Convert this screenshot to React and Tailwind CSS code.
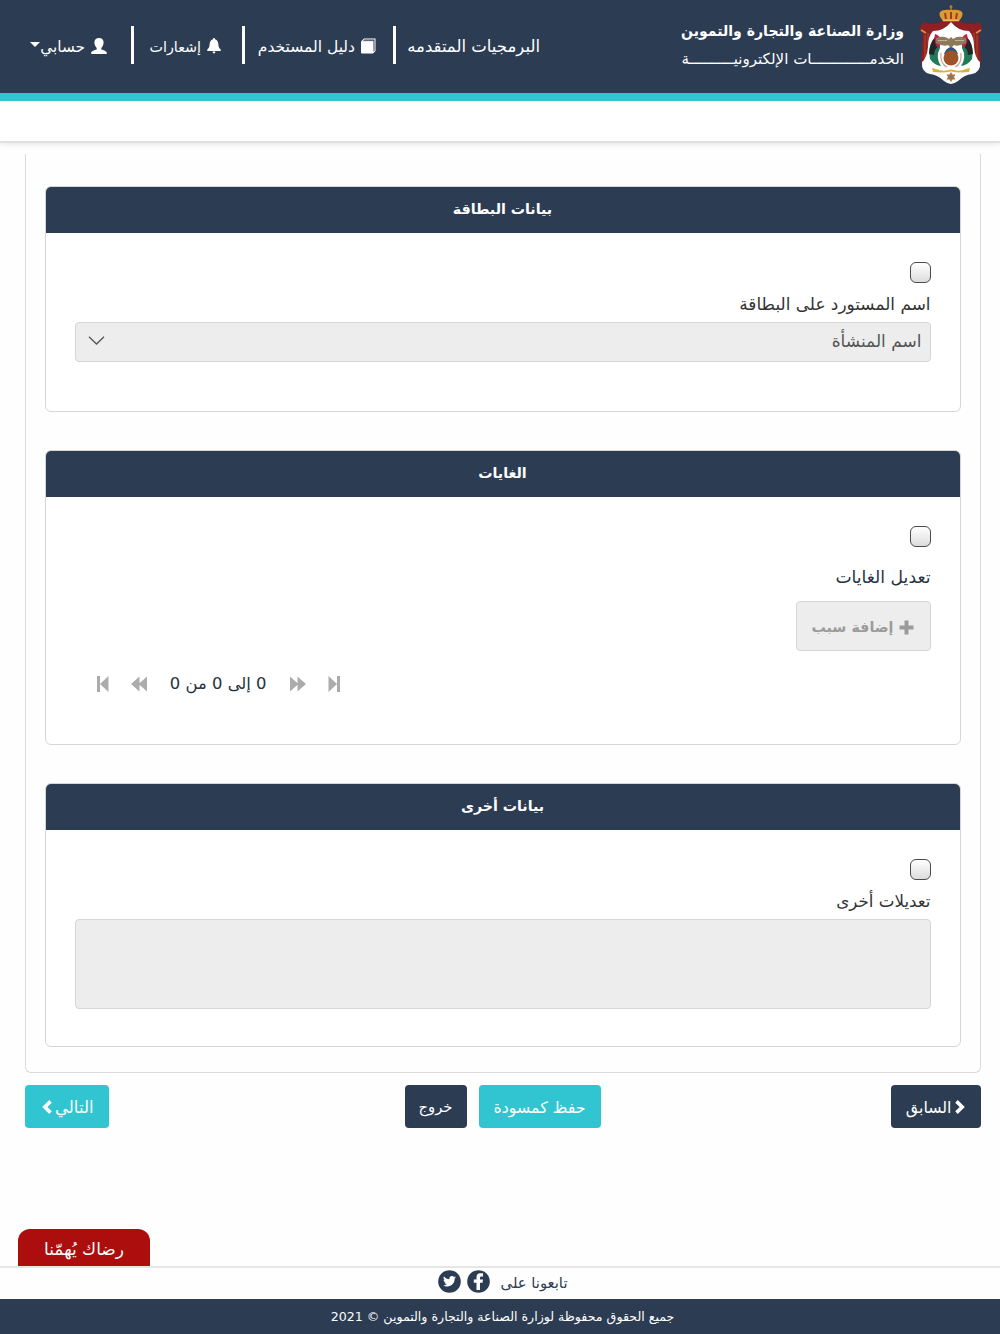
import React, { useState } from 'react';

const Emblem = () => (
    <svg width="62" height="80" viewBox="0 0 62 80" className="shrink-0">
        <path d="M20 17 Q9 21 5 17 Q0 19 0 25 L3 29 L1 57 L10 60 L14 30 L31 18 L48 30 L52 60 L61 57 L59 29 L62 25 Q62 19 57 17 Q53 21 42 17 Q36 14 31 16 Q26 14 20 17Z" fill="#8f1f22" />
        <path d="M5 30v24M8 28v28M54 28v28M57 30v24" stroke="#a9502a" strokeWidth="1" />
        <path d="M1 25l5 3M61 25l-5 3" stroke="#d9953c" strokeWidth="1.500" />
        <path d="M31 17 Q24 26 13 26 Q8 31 8 42 Q7 53 2 57 Q1 67 10 69 Q18 70 24 76 Q28 79 31 79 Q34 79 38 76 Q44 70 52 69 Q61 67 60 57 Q55 53 54 42 Q54 31 49 26 Q38 26 31 17Z" fill="#fff" />
        <path d="M20 32 L13 35 Q8 44 10 54 Q14 60 21 61 Q15 52 20 43Z" fill="#1e7a57" />
        <path d="M20 32 L15 32 Q9 39 9 49 L14 50 Q14 44 20 40Z" fill="#222629" />
        <path d="M15 29 Q19 30 22 36 L18 43 Q13 37 15 29Z" fill="#c41f4b" />
        <path d="M42 32 L49 35 Q54 44 52 54 Q48 60 41 61 Q47 52 42 43Z" fill="#1e7a57" />
        <path d="M42 32 L47 32 Q53 39 53 49 L48 50 Q48 44 42 40Z" fill="#222629" />
        <path d="M47 29 Q43 30 40 36 L44 43 Q49 37 47 29Z" fill="#c41f4b" />
        <path d="M16 33 Q24 30 29 34 L31 32 L33 34 Q38 30 46 33 L46 38 Q38 42 34 40 L31 43 L28 40 Q24 42 16 38Z" fill="#8d7a5b" />
        <path d="M18 35.500h9M35 35.500h9" stroke="#c2b391" strokeWidth="1.200" />
        <path d="M21 48 Q20 59 27 62 M41 48 Q42 59 35 62" stroke="#c9a28e" strokeWidth="1.2" fill="none" />
        <path d="M24 49 Q26 43 31 42 Q36 43 38 49Z" fill="#2c567d" />
        <circle cx="31" cy="53" r="7.500" fill="#9c5329" />
        <path d="M12 63 L16 64 Q23 67 31 64.500 Q39 67 46 64 L50 63 L49 67 Q39 68 31 66.500 Q23 68 13 67Z" fill="#d9b13c" />
        <path d="M31 67l1.500 2.500h3L34 72l1.500 2.500h-3L31 77l-1.500-2.500h-3L28 72l-1.500-2.500h3z" fill="#b5713f" />
        <circle cx="31" cy="72" r="1.500" fill="#4f8a80" />
        <path d="M23 16 Q18 10 20 7 Q23 4 31 5 Q39 4 42 7 Q44 10 39 16Z" fill="#dd9838" />
        <path d="M25 8l1 6M37 8l-1 6M31 7v7" stroke="#a63a24" strokeWidth="2" />
        <path d="M23 15.500h16" stroke="#efc458" strokeWidth="1.500" />
        <path d="M31 0v5M29.500 2h3" stroke="#c98f38" strokeWidth="1.200" />
    </svg>
);

const UserIcon = () => (
    <svg width="16" height="16" viewBox="0 0 16 16" fill="#fff">
        <path d="M8 0C5 0 3.300 1.800 3.400 4.600C3.500 7 4.300 8.700 5.700 10V11.400C3.300 12.200 .3 13 .2 14.600V16H15.800V14.600C15.700 13 12.700 12.200 10.300 11.400V10C11.700 8.700 12.500 7 12.600 4.600C12.700 1.800 11 0 8 0Z" />
    </svg>
);

const BellIcon = () => (
    <svg width="14" height="16" viewBox="0 0 14 16" fill="#fff">
        <path d="M7 0Q6 0 5.900 1.200C3.600 2 2.700 4 2.600 6.500C2.400 9.300 1.800 10.300 .3 11.500Q-.3 13 1 13H13Q14.300 13 13.700 11.500C12.200 10.300 11.600 9.300 11.400 6.500C11.300 4 10.400 2 8.100 1.200Q8 0 7 0ZM5.600 13.400a1.400 2 0 0 0 2.800 0Z" />
    </svg>
);

const BookIcon = () => (
    <svg width="15" height="16" viewBox="0 0 15 16">
        <path d="M0 3.500L3 .5H14.500V13L12 15.500V3.500Z" fill="#fff" />
        <path d="M2 2.800L3.300 1.500H13.500V12.700L12.500 13.700V2.800Z" fill="#2c3c52" />
        <path d="M0 3.200H12V15.500H1Q0 15.500 0 14.500Z" fill="#fff" />
    </svg>
);

const PlusIcon = () => (
    <svg width="15" height="15" viewBox="0 0 15 15" fill="currentColor">
        <path d="M5.500 .5h4v5h5v4h-5v5h-4v-5h-5v-4h5z" />
    </svg>
);

const ChevronIcon = () => (
    <svg width="10" height="14" viewBox="0 0 10 14" fill="none" stroke="currentColor" strokeWidth="3.600">
        <path d="M1.500 1.400L7.200 7L1.500 12.600" />
    </svg>
);

const FacebookIcon = () => (
    <svg width="23" height="23" viewBox="0 0 23 23">
        <circle cx="11.500" cy="11.500" r="11.300" fill="#2c3c52" />
        <path d="M9.500 20V12.700H6.800V9.500H9.500V7.200Q9.500 3.300 13.200 3.300H16V6.500H14.300Q13 6.500 13 7.800V9.500H16L15.500 12.700H13V20Z" fill="#fff" />
    </svg>
);

const TwitterIcon = () => (
    <svg width="23" height="23" viewBox="0 0 23 23">
        <circle cx="11.500" cy="11.500" r="11.300" fill="#2c3c52" />
        <path
            transform="translate(5 4.800) scale(.54)"
            d="M23.950 4.570a10 10 0 0 1-2.820.77 4.960 4.960 0 0 0 2.160-2.720c-.95.560-2 .96-3.130 1.180a4.920 4.920 0 0 0-8.380 4.480C7.690 8.090 4.070 6.130 1.640 3.160a4.820 4.820 0 0 0-.67 2.480c0 1.710.87 3.210 2.190 4.100a4.900 4.900 0 0 1-2.230-.62v.06a4.920 4.920 0 0 0 3.950 4.830 5 5 0 0 1-2.210.08 4.940 4.940 0 0 0 4.600 3.420A9.870 9.870 0 0 1 0 19.540a14 14 0 0 0 7.550 2.210c9.050 0 14-7.500 14-13.980 0-.21 0-.42-.02-.63a9.940 9.940 0 0 0 2.460-2.550z"
            fill="#fff"
        />
    </svg>
);

const Divider = () => <span className="h-[38px] w-[3px] bg-white" />;

const Header = () => (
    <header className="border-b-2 border-[#dfe1e1] bg-white shadow-[0_2px_4px_rgba(0,0,0,0.08)]">
        <div className="flex h-[93px] items-start bg-[#2c3c52] pr-[18px] text-[15px] text-white">
            <div className="pt-[5px]">
                <Emblem />
            </div>
            <div className="mr-4 w-[223px] whitespace-nowrap pt-[17px] leading-[28px]">
                <div className="origin-right scale-x-[0.937] text-[15px] font-bold">وزارة الصناعة والتجارة والتموين</div>
                <div className="text-[15.1px]">الخدمـــــــــــــات الإلكترونيــــــــــة</div>
            </div>
            <nav className="mr-[141px] flex items-center whitespace-nowrap pt-[26px]">
                <span className="w-[132px] pt-1 text-[16.5px]">البرمجيات المتقدمه</span>
                <span className="mr-3 flex"><Divider /></span>
                <span className="mr-[17px] pt-0.5"><BookIcon /></span>
                <span className="mr-1.5 w-[97px] pt-1.5 text-[15.5px]">دليل المستخدم</span>
                <span className="mr-[13px] flex"><Divider /></span>
                <span className="mr-[21px] pt-0.5"><BellIcon /></span>
                <span className="mr-1.5 w-[51px] pt-1.5 text-[14.3px]">إشعارات</span>
                <span className="mr-4 flex"><Divider /></span>
                <span className="mr-6 pt-0.5"><UserIcon /></span>
                <span className="mr-1.5 w-[45px] pt-1 text-[15.3px]">حسابي</span>
                <span className="mb-0.5 border-x-[5px] border-t-[5px] border-x-transparent border-t-white" />
            </nav>
        </div>
        <div className="h-2 bg-[#31c5d1]" />
        <div className="h-10" />
    </header>
);

const Panel = ({ title, className, children }) => (
    <section className={`overflow-hidden rounded-md border border-[#d4d6d8] bg-white ${className}`}>
        <h2 className="h-[45.5px] bg-[#2c3c52] text-center text-[14.2px] font-bold leading-[44px] text-white">
            {title}
        </h2>
        <div className="px-[29px] pt-[29px]">{children}</div>
    </section>
);

const Checkbox = () => {
    const [checked, setChecked] = useState(false);
    return (
        <input
            type="checkbox"
            checked={checked}
            onChange={(e) => setChecked(e.target.checked)}
            className="block size-[21px] appearance-none rounded-md border-[1.5px] border-[#4a4a4a] bg-linear-to-b from-white to-[#dcdcdc] checked:to-[#31c5d1]"
        />
    );
};

const FirstIcon = () => (
    <svg width="12" height="16" viewBox="0 0 12 16" fill="#acacac">
        <path d="M0 0h3v16H0zM11.500 0v16L3 8z" />
    </svg>
);

const PrevIcon = () => (
    <svg width="16" height="16" viewBox="0 0 16 16" fill="#acacac">
        <path d="M8.500 .5v15L0 8zM16 .5v15L7.500 8z" />
    </svg>
);

const App = () => (
    <div dir="rtl" className="flex h-[1334px] flex-col overflow-hidden bg-[#fefefe] font-['DejaVu_Sans',sans-serif] text-[#333]">
        <Header />

        <main className="mt-[11px] flex-1 pr-[19.5px] pl-[24.5px]">
            <div className="h-[919px] rounded-b-md border-x-[1.5px] border-b-[1.5px] border-[#d8dadb] px-[19px] pt-8">
                <Panel title="بيانات البطاقة" className="h-[226px]">
                    <Checkbox />
                    <div className="mt-2 h-[29px] text-[16.9px] leading-[26px]">اسم المستورد على البطاقة</div>
                    <div className="mt-0.5 flex h-10 items-center justify-between rounded border border-[#d5d6d7] bg-[#ededed] pr-2 pb-0.5 pl-3 text-[17px] text-[#555]">
                        <span className="leading-[34px]">اسم المنشأة</span>
                        <svg width="17" height="9" viewBox="0 0 17 9" fill="none" stroke="#555" strokeWidth="1.3">
                            <path d="M1 .8L8.500 8L16 .8" />
                        </svg>
                    </div>
                </Panel>

                <Panel title="الغايات" className="mt-[38px] h-[295px]">
                    <Checkbox />
                    <div className="mt-[17px] h-[29px] text-[17.2px] leading-[26px] text-[#263242]">تعديل الغايات</div>
                    <button disabled className="mt-2 flex h-[50px] w-[135px] items-center rounded border border-[#d5d6d7] bg-[#ededed] pt-1 pr-4 text-[14.3px] font-bold whitespace-nowrap text-[#9b9b9b]">
                        <PlusIcon />
                        <span className="mr-[5px]">إضافة سبب</span>
                    </button>
                    <div dir="ltr" className="mt-[21.5px] flex h-6 items-center pl-[22px] text-[16.4px] text-[#263242]">
                        <FirstIcon />
                        <span className="ml-[22px]"><PrevIcon /></span>
                        <span dir="rtl" className="ml-[23px] w-[97px] whitespace-nowrap leading-6">0 إلى 0 من 0</span>
                        <span className="ml-[23px] rotate-180"><PrevIcon /></span>
                        <span className="ml-[22px] rotate-180"><FirstIcon /></span>
                    </div>
                </Panel>

                <Panel title="بيانات أخرى" className="mt-[38px] h-[264px]">
                    <Checkbox />
                    <div className="mt-2 h-[29px] text-[16.7px] leading-[26px]">تعديلات أخرى</div>
                    <textarea disabled className="mt-0.5 block h-[90px] w-full resize-none rounded border border-[#d5d6d7] bg-[#ededed]" />
                </Panel>
            </div>

            <div className="mt-3 flex h-[43px] whitespace-nowrap text-[15.8px] text-white">
                <button className="flex w-[90px] items-center rounded bg-[#2c3c52] pr-4">
                    <ChevronIcon />
                    <span className="mr-[3px] pt-0.5">السابق</span>
                </button>
                <button className="mr-[290px] w-[122px] rounded bg-[#31c5d1] pt-0.5">حفظ كمسودة</button>
                <button className="mr-3 w-[62px] rounded bg-[#2c3c52] pt-0.5 text-[14.8px]">خروج</button>
                <button className="mr-auto flex w-[84px] items-center rounded bg-[#31c5d1] pr-[15px]">
                    <span className="w-[38px] pt-1 text-[16.5px]">التالي</span>
                    <span className="mr-1 rotate-180"><ChevronIcon /></span>
                </button>
            </div>
        </main>

        <div className="flex justify-end pl-[18px]">
            <button className="h-[37px] w-[132px] rounded-t-xl bg-[#ac0d0d] pt-1 text-[17px] text-white">رضاك يُهمّنا</button>
        </div>
        <footer>
            <div className="flex h-[33px] items-center justify-center border-t-2 border-[#e6e6e6] pb-1 pl-[5px] text-[14.8px] text-[#2c3c52]">
                <span className="w-[67px] whitespace-nowrap pt-1">تابعونا على</span>
                <span className="mr-[11px]"><FacebookIcon /></span>
                <span className="mr-1.5"><TwitterIcon /></span>
            </div>
            <div className="h-[35px] bg-[#2c3c52] pl-[5px] text-center text-[12.6px] leading-[35px] text-white">
                جميع الحقوق محفوظة لوزارة الصناعة والتجارة والتموين © 2021
            </div>
        </footer>
    </div>
);

export default App;
